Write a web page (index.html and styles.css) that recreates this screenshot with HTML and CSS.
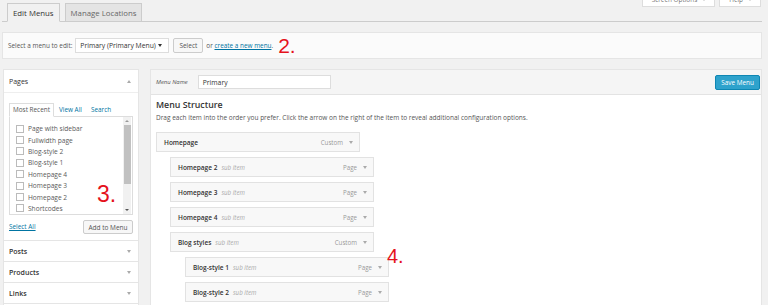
FILE: index.html
```html
<!DOCTYPE html>
<html>
<head>
<meta charset="utf-8">
<link rel="stylesheet" href="styles.css">
</head>
<body>
<div class="wrap">
  <div class="nav-row">
    <span class="nav-tab active">Edit Menus</span>
    <span class="nav-tab">Manage Locations</span>
    <div class="screen-meta">
      <span class="meta-btn">Screen Options <i class="tri-down"></i></span>
      <span class="meta-btn">Help <i class="tri-down"></i></span>
    </div>
  </div>

  <div class="manage-bar">
    <span class="lbl">Select a menu to edit:</span>
    <span class="select">Primary (Primary Menu) <i class="tri-down dark"></i></span>
    <span class="btn">Select</span>
    <span class="or">or <span class="link">create a new menu</span>.</span>
    <span class="anno anno-2">2.</span>
  </div>

  <div class="content">
    <div class="sidebar">
      <div class="acc pages">
        <div class="acc-head"><span>Pages</span><i class="tri-up"></i></div>
        <div class="acc-body">
          <div class="tabs">
            <span class="tab active">Most Recent</span>
            <span class="tab">View All</span>
            <span class="tab">Search</span>
          </div>
          <div class="list-box">
            <ul class="checklist">
              <li><span class="cb"></span>Page with sidebar</li>
              <li><span class="cb"></span>Fullwidth page</li>
              <li><span class="cb"></span>Blog-style 2</li>
              <li><span class="cb"></span>Blog-style 1</li>
              <li><span class="cb"></span>Homepage 4</li>
              <li><span class="cb"></span>Homepage 3</li>
              <li><span class="cb"></span>Homepage 2</li>
              <li><span class="cb"></span>Shortcodes</li>
            </ul>
            <div class="scrollbar">
              <span class="sb-arrow"><i class="tri-up small"></i></span>
              <span class="sb-thumb"></span>
              <span class="sb-fill"></span>
              <span class="sb-arrow"><i class="tri-down small dark"></i></span>
            </div>
            <span class="anno anno-3">3.</span>
          </div>
          <div class="add-row">
            <span class="link">Select All</span>
            <span class="btn add">Add to Menu</span>
          </div>
        </div>
      </div>
      <div class="acc closed"><div class="acc-head"><span>Posts</span><i class="tri-down"></i></div></div>
      <div class="acc closed"><div class="acc-head"><span>Products</span><i class="tri-down"></i></div></div>
      <div class="acc closed"><div class="acc-head"><span>Links</span><i class="tri-down"></i></div></div>
      <div class="acc closed"><div class="acc-head"></div></div>
    </div>

    <div class="menu-edit">
      <div class="menu-head">
        <span class="name-lbl">Menu Name</span>
        <span class="name-input">Primary</span>
        <span class="save">Save Menu</span>
      </div>
      <div class="menu-body">
        <h3>Menu Structure</h3>
        <p class="desc">Drag each item into the order you prefer. Click the arrow on the right of the item to reveal additional configuration options.</p>
        <ul class="menu-items">
          <li class="item d0"><span class="title">Homepage</span><span class="type">Custom</span><i class="tri-down"></i></li>
          <li class="item d1"><span class="title">Homepage 2</span><span class="sub">sub item</span><span class="type">Page</span><i class="tri-down"></i></li>
          <li class="item d1"><span class="title">Homepage 3</span><span class="sub">sub item</span><span class="type">Page</span><i class="tri-down"></i></li>
          <li class="item d1"><span class="title">Homepage 4</span><span class="sub">sub item</span><span class="type">Page</span><i class="tri-down"></i></li>
          <li class="item d1"><span class="title">Blog styles</span><span class="sub">sub item</span><span class="type">Custom</span><i class="tri-down"></i></li>
          <li class="item d2"><span class="title">Blog-style 1</span><span class="sub">sub item</span><span class="type">Page</span><i class="tri-down"></i></li>
          <li class="item d2"><span class="title">Blog-style 2</span><span class="sub">sub item</span><span class="type">Page</span><i class="tri-down"></i></li>
        </ul>
        <span class="anno anno-4">4.</span>
      </div>
    </div>
  </div>
</div>
</body>
</html>
```

FILE: styles.css
```css
html, body {
  margin: 0;
  padding: 0;
}
body {
  background: #f1f1f1;
  font-family: "Open Sans", "Liberation Sans", sans-serif;
  color: #444;
  height: 305px;
  overflow: hidden;
  white-space: nowrap;
}
ul { list-style: none; margin: 0; padding: 0; }
i { font-style: normal; }

.wrap {
  padding: 0 6px 0 2px;
}

/* triangles */
.tri-down, .tri-up {
  display: inline-block;
  flex: none;
  width: 0;
  height: 0;
  border-left: 2.5px solid transparent;
  border-right: 2.5px solid transparent;
}
.tri-down { border-top: 3px solid #aaa; }
.tri-up { border-bottom: 3px solid #aaa; }
.tri-down.dark { border-top-color: #333; }
.tri-up.small, .tri-down.small {
  border-left-width: 2px;
  border-right-width: 2px;
}
.tri-up.small { border-bottom: 2px solid #999; }
.tri-down.small { border-top: 2px solid #555; }

/* top tabs */
.nav-row {
  display: flex;
  align-items: flex-end;
  height: 22px;
  box-sizing: border-box;
  border-bottom: 1px solid #ccc;
  padding-left: 5px;
}
.nav-tab {
  box-sizing: border-box;
  height: 19px;
  line-height: 18px;
  margin-bottom: -1px;
  margin-right: 5px;
  padding: 0 5px;
  border: 1px solid #ccc;
  background: #e4e4e4;
  color: #666;
  font-size: 7.8px;
}
.nav-tab.active {
  background: #f1f1f1;
  border-bottom-color: #f1f1f1;
  color: #333;
}
.screen-meta {
  margin-left: auto;
  align-self: flex-start;
  display: flex;
  gap: 4px;
  margin-top: -7px;
  margin-right: 1px;
}
.meta-btn {
  box-sizing: border-box;
  height: 14px;
  display: flex;
  align-items: center;
  gap: 5px;
  padding: 0 8px 0 9px;
  background: #fff;
  border: 1px solid #ddd;
  border-top: none;
  font-size: 6.4px;
  color: #777;
}

/* select bar */
.manage-bar {
  margin-top: 10px;
  height: 27px;
  box-sizing: border-box;
  border: 1px solid #e5e5e5;
  background: #fbfbfb;
  display: flex;
  align-items: center;
  padding-left: 5px;
  font-size: 6.4px;
  color: #555;
}
.select {
  box-sizing: border-box;
  margin-left: 3px;
  width: 94px;
  height: 15px;
  background: #fff;
  border: 1px solid #ddd;
  display: flex;
  align-items: center;
  justify-content: space-between;
  padding: 0 6px 0 4px;
  font-size: 6.8px;
  color: #333;
}
.btn {
  box-sizing: border-box;
  height: 15px;
  display: inline-flex;
  align-items: center;
  justify-content: center;
  padding: 0 4px;
  background: #f7f7f7;
  border: 1px solid #ccc;
  border-radius: 2px;
  color: #555;
  font-size: 6.5px;
}
.manage-bar .btn { margin-left: 4px; width: 30px; }
.or { margin-left: 3px; }
.link {
  color: #0074a2;
  text-decoration: underline;
}
.anno {
  font-family: "Liberation Sans", "DejaVu Sans", sans-serif;
  color: #e5121c;
  line-height: 1;
}
.anno-2 {
  font-size: 21px;
  margin-left: 5px;
  margin-top: -1px;
}

/* content */
.content {
  display: flex;
  align-items: flex-start;
  margin-top: 10px;
}
.sidebar {
  width: 136px;
  margin-left: 1px;
  flex: none;
}
.acc {
  background: #fff;
  border: 1px solid #e5e5e5;
  border-top: none;
}
.acc.pages { border-top: 1px solid #e5e5e5; }
.acc-head {
  height: 20px;
  display: flex;
  align-items: center;
  justify-content: space-between;
  padding: 0 7px 0 5px;
  font-size: 7px;
  font-weight: 600;
  color: #333;
}
.pages .acc-head {
  height: 22px;
  font-weight: 400;
  border-bottom: 1px solid #eee;
}
.acc-body {
  padding: 10px 5px 6px 5px;
}
.tabs {
  display: flex;
  align-items: flex-end;
  height: 13px;
  font-size: 6.4px;
}
.tab {
  color: #0074a2;
  margin-left: 1px;
  padding: 0 4px 0 4px;
  line-height: 12px;
}
.tab.active {
  margin-left: 0;
  color: #555;
  border: 1px solid #ddd;
  border-bottom: 1px solid #fff;
  margin-bottom: -1px;
  padding: 0 3px;
  background: #fff;
  position: relative;
  z-index: 1;
}
.list-box {
  position: relative;
  box-sizing: border-box;
  height: 99px;
  border: 1px solid #ddd;
  display: flex;
  overflow: hidden;
}
.checklist {
  flex: 1;
  padding: 6px 0 0 6px;
  font-size: 6.6px;
  color: #5a5a5a;
}
.checklist li {
  display: flex;
  align-items: center;
  height: 11.4px;
}
.cb {
  box-sizing: border-box;
  width: 8px;
  height: 8px;
  border: 1px solid #bbb;
  background: #fff;
  margin-right: 4px;
  flex: none;
}
.scrollbar {
  width: 8px;
  margin-right: 1px;
  background: #f1f1f1;
  display: flex;
  flex-direction: column;
  align-items: center;
}
.sb-arrow {
  height: 8px;
  display: flex;
  align-items: center;
  justify-content: center;
}
.sb-thumb {
  width: 7px;
  height: 59px;
  background: #c1c1c1;
}
.sb-fill { flex: 1; }
.anno-3 {
  position: absolute;
  left: 87px;
  top: 66px;
  font-size: 23px;
}
.add-row {
  margin-top: 4px;
  display: flex;
  align-items: center;
  justify-content: space-between;
  font-size: 6.4px;
}
.btn.add {
  height: 14px;
  width: 50px;
  margin-top: 1px;
}

/* menu edit */
.menu-edit {
  flex: 1;
  margin-left: 11px;
  background: #fff;
  border: 1px solid #e5e5e5;
  height: 260px;
}
.menu-head {
  height: 24px;
  background: #f5f5f5;
  border-bottom: 1px solid #e3e3e3;
  display: flex;
  align-items: center;
  padding: 0 1px 0 5px;
}
.name-lbl {
  font-size: 5.9px;
  font-style: italic;
  color: #555;
}
.name-input {
  box-sizing: border-box;
  margin-left: 10px;
  width: 133px;
  height: 14px;
  background: #fff;
  border: 1px solid #ddd;
  display: flex;
  align-items: center;
  padding-left: 4px;
  font-size: 6.8px;
  color: #333;
}
.save {
  margin-left: auto;
  box-sizing: border-box;
  width: 45px;
  height: 15px;
  display: flex;
  align-items: center;
  justify-content: center;
  background: #2ea2cc;
  border: 1px solid #0e86b3;
  border-radius: 2px;
  color: #fff;
  font-size: 6.4px;
}
.menu-body {
  position: relative;
  padding: 4px 5px 0 5px;
}
h3 {
  margin: 0;
  font-size: 8.8px;
  line-height: 12px;
  font-weight: 600;
  color: #333;
}
.desc {
  margin: 2px 0 0 0;
  font-size: 6.5px;
  line-height: 9px;
  color: #555;
}
.menu-items {
  margin-top: 10px;
}
.item {
  box-sizing: border-box;
  width: 204px;
  height: 20px;
  margin-bottom: 5px;
  background: #f8f8f8;
  border: 1px solid #e2e2e2;
  display: flex;
  align-items: center;
  padding: 0 6px 0 7px;
}
.item.d1 { margin-left: 14px; }
.item.d2 { margin-left: 29px; }
.title {
  font-size: 6.5px;
  font-weight: 600;
  color: #333;
}
.sub {
  margin-left: 4px;
  font-size: 6.2px;
  font-style: italic;
  color: #aaa;
}
.type {
  margin-left: auto;
  margin-right: 6px;
  font-size: 6.2px;
  color: #999;
}
.anno-4 {
  position: absolute;
  left: 236px;
  top: 151px;
  font-size: 20px;
}
```
